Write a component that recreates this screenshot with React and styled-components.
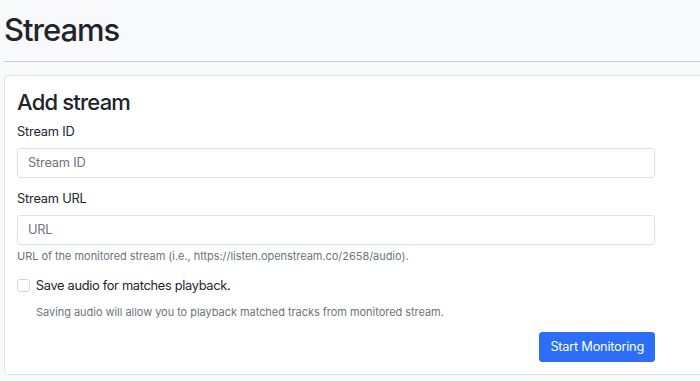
import React from 'react'
import styled, { createGlobalStyle } from 'styled-components'

const Global = createGlobalStyle`
  html, body {
    margin: 0;
    padding: 0;
    background: #f8f9fa;
    overflow: hidden;
  }
  body {
    font-family: 'Inter', 'Liberation Sans', sans-serif;
    color: #212529;
  }
  * { box-sizing: border-box; }
`;

const Page = styled.main`
  width: 720px;
  padding: 11px 0 0 4px;
`;

const Title = styled.h1`
  font-size: 31px;
  font-weight: 500;
  line-height: 1.24;
  margin: 0;
  letter-spacing: -1px;
`;

const Rule = styled.hr`
  border: 0;
  border-top: 1px solid #c9cbcd;
  margin: 12px 0 13px;
`;

const Card = styled.section`
  background: #fff;
  border: 1px solid #dfe1e3;
  border-radius: 4px;
  padding: 13px 12px 12px;
`;

const CardTitle = styled.h3`
  font-size: 22px;
  font-weight: 500;
  line-height: 1.22;
  margin: 0 0 6px;
  letter-spacing: -0.8px;
`;

const Form = styled.form`
  width: 638px;
  display: flex;
  flex-direction: column;
`;

const Field = styled.div`
  margin-bottom: ${p => p.$gap ?? 11.5}px;
`;

const Label = styled.label`
  display: block;
  font-size: 12.8px;
  line-height: 1.5;
  margin-bottom: 6.4px;
  letter-spacing: -0.2px;
`;

const Input = styled.input`
  display: block;
  width: 100%;
  height: 30px;
  padding: 0 10px;
  font-family: inherit;
  font-size: 12.8px;
  letter-spacing: -0.2px;
  color: #212529;
  background: #fff;
  border: 1px solid #dee2e6;
  border-radius: 3px;
  outline: none;
  &::placeholder { color: #6c757d; }
`;

const Help = styled.div`
  font-size: 11px;
  line-height: 1.5;
  letter-spacing: -0.04px;
  color: #6c757d;
  margin-top: ${p => p.$top ?? 3}px;
  padding-left: ${p => p.$indent ?? 0}px;
`;

const CheckRow = styled.label`
  display: flex;
  align-items: center;
  gap: 6px;
  font-size: 12.8px;
  line-height: 1.5;
  letter-spacing: -0.3px;
`;

const Box = styled.input.attrs({ type: 'checkbox' })`
  appearance: none;
  width: 12.8px;
  height: 12.8px;
  margin: 0;
  border: 1px solid #d4d7da;
  border-radius: 3px;
  background: #fff;
`;

const Actions = styled.div`
  display: flex;
  justify-content: flex-end;
  margin-top: 11px;
`;

const Button = styled.button`
  height: 30px;
  padding: 0 10px;
  font-family: inherit;
  font-size: 12.8px;
  letter-spacing: -0.25px;
  color: #fff;
  background: #2c6ef5;
  border: 1px solid #2c6ef5;
  border-radius: 3px;
`;

export default function App() {
  return (
    <>
      <Global />
      <Page>
        <Title>Streams</Title>
        <Rule />
        <Card>
          <CardTitle>Add stream</CardTitle>
          <Form onSubmit={e => e.preventDefault()}>
            <Field>
              <Label htmlFor="sid">Stream ID</Label>
              <Input id="sid" placeholder="Stream ID" />
            </Field>
            <Field>
              <Label htmlFor="surl">Stream URL</Label>
              <Input id="surl" placeholder="URL" />
              <Help>URL of the monitored stream (i.e., https://listen.openstream.co/2658/audio).</Help>
            </Field>
            <Field $gap={0}>
              <CheckRow>
                <Box />
                Save audio for matches playback.
              </CheckRow>
              <Help $top={9} $indent={19}>Saving audio will allow you to playback matched tracks from monitored stream.</Help>
            </Field>
            <Actions>
              <Button type="submit">Start Monitoring</Button>
            </Actions>
          </Form>
        </Card>
      </Page>
    </>
  )
}
